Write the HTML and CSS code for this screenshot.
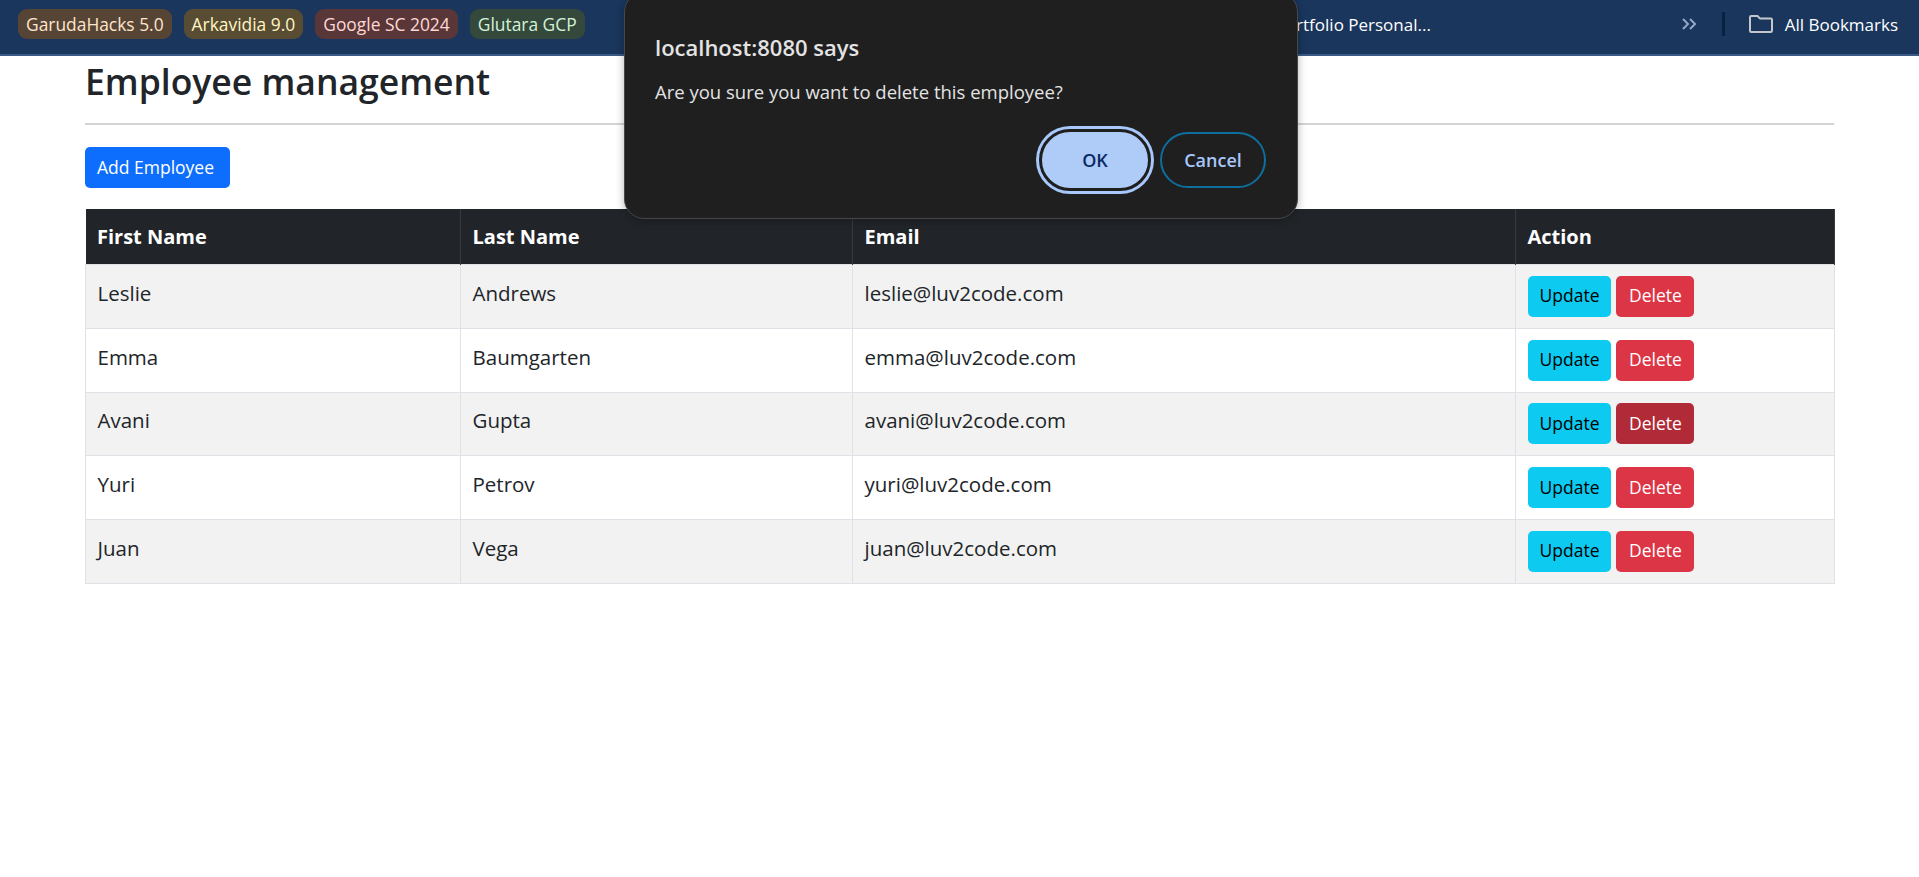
FILE: index.html
```html
<!DOCTYPE html>
<html lang="en">
<head>
<meta charset="utf-8">
<title>Employee management</title>
<link rel="stylesheet" href="styles.css">
</head>
<body>
<header class="bookmarks">
  <a class="chip chip-orange">GarudaHacks 5.0</a>
  <a class="chip chip-yellow">Arkavidia 9.0</a>
  <a class="chip chip-red">Google SC 2024</a>
  <a class="chip chip-green">Glutara GCP</a>
  <a class="plain portfolio">Portfolio Personal...</a>
  <svg class="more" width="14" height="12" viewBox="0 0 14 12"><path d="M1 1l5 5-5 5M8 1l5 5-5 5" fill="none" stroke="#93a6c6" stroke-width="2"/></svg>
  <span class="divider"></span>
  <svg class="folder" width="24" height="18" viewBox="0 0 24 18"><path d="M1 2.2A1.2 1.2 0 0 1 2.2 1h6.3l2.6 2.6h10.7A1.2 1.2 0 0 1 23 4.8v10.9a1.2 1.2 0 0 1-1.2 1.2H2.2A1.2 1.2 0 0 1 1 15.7z" fill="none" stroke="#c4c7cc" stroke-width="2"/></svg>
  <a class="plain">All Bookmarks</a>
</header>

<main class="container">
  <h2 class="title">Employee management</h2>
  <hr class="rule">
  <a class="btn btn-primary add">Add Employee</a>
  <table class="staff">
    <colgroup>
      <col class="c1"><col class="c2"><col class="c3"><col class="c4">
    </colgroup>
    <thead>
      <tr><th>First Name</th><th>Last Name</th><th>Email</th><th>Action</th></tr>
    </thead>
    <tbody>
      <tr><td>Leslie</td><td>Andrews</td><td>leslie@luv2code.com</td><td class="actions"><a class="btn btn-info">Update</a><a class="btn btn-danger">Delete</a></td></tr>
      <tr><td>Emma</td><td>Baumgarten</td><td>emma@luv2code.com</td><td class="actions"><a class="btn btn-info">Update</a><a class="btn btn-danger">Delete</a></td></tr>
      <tr><td>Avani</td><td>Gupta</td><td>avani@luv2code.com</td><td class="actions"><a class="btn btn-info">Update</a><a class="btn btn-danger hover">Delete</a></td></tr>
      <tr><td>Yuri</td><td>Petrov</td><td>yuri@luv2code.com</td><td class="actions"><a class="btn btn-info">Update</a><a class="btn btn-danger">Delete</a></td></tr>
      <tr><td>Juan</td><td>Vega</td><td>juan@luv2code.com</td><td class="actions"><a class="btn btn-info">Update</a><a class="btn btn-danger">Delete</a></td></tr>
    </tbody>
  </table>
</main>

<section class="dialog">
  <h1 class="dialog-title">localhost:8080 says</h1>
  <p class="dialog-text">Are you sure you want to delete this employee?</p>
  <div class="dialog-buttons">
    <button class="pill ok">OK</button>
    <button class="pill cancel">Cancel</button>
  </div>
</section>
</body>
</html>
```
FILE: styles.css
```css
* { box-sizing: border-box; }
html, body { margin: 0; padding: 0; }
body { height: 877px; overflow: hidden; background: #fff; color: #212529; font-family: "Open Sans", "Noto Sans", sans-serif; position: relative; }

.bookmarks { height: 56px; background: #1a365d; border-bottom: 2px solid #3a5a85; display: flex; align-items: center; padding: 0 21px 6px 18px; color: #fff; font-size: 17px; }
.chip { height: 30px; display: flex; align-items: center; padding: 0 8px; border-radius: 9px; margin-right: 12px; white-space: nowrap; font-weight: 500; font-size: 17.4px; }
.chip-orange { background: #564435; color: #ffe4cc; }
.chip-yellow { background: #584c32; color: #fff5c4; }
.chip-red { background: #593739; color: #ffd8d3; }
.chip-green { background: #35483c; color: #d3f3d8; }
.plain { white-space: nowrap; }
.portfolio { margin-left: 679px; }
.more { margin-left: auto; }
.divider { width: 3px; height: 24px; background: #0b2142; margin: 0 24px 0 26px; }
.folder { margin-right: 12px; }

.container { padding: 0 85px; }
.title { margin: -1px 0 0; font-size: 35.5px; font-weight: 600; line-height: 52px; }
.rule { margin: 16px 0 22px; border: 0; border-top: 2px solid #d4d4d4; }
.btn { display: inline-flex; align-items: center; height: 41px; padding: 0 12px 2px; border-radius: 5px; font-size: 17.5px; }
.btn-primary { background: #0d6efd; color: #fff; }
.btn-info { background: #0dcaf0; color: #000; }
.btn-danger { background: #dc3545; color: #fff; margin-left: 5px; padding: 0 12.5px 2px; }
.btn-danger.hover { background: #b02a37; }
.add { display: flex; width: 145px; }

.staff { width: 1749px; table-layout: fixed; border-collapse: collapse; margin-top: 21px; font-size: 20.5px; }
.c1 { width: 375px; } .c2 { width: 392px; } .c3 { width: 663px; } .c4 { width: 319px; }
.staff th { height: 55.5px; padding: 0 11.5px; text-align: left; background: #212529; color: #fff; font-weight: 700; font-size: 20px; border-right: 1px solid #373b3e; }
.staff td { height: 63.75px; padding: 0 11.5px 7px; border: 1px solid #dee2e6; }
.staff tbody tr:nth-child(odd) td { background: #f2f2f2; }
.staff .actions { padding-bottom: 0; }

.dialog { position: absolute; left: 624px; top: -8px; width: 674px; height: 227px; background: #1f1f1f; border: 1px solid #474747; border-radius: 20px; padding: 39px 31px 0 30px; box-shadow: 0 2px 8px rgba(0,0,0,.3); color: #e3e3e3; }
.dialog-title { margin: 0; font-size: 22px; font-weight: 600; line-height: 30px; }
.dialog-text { margin: 18px 0 0; font-size: 18.5px; line-height: 24px; }
.dialog-buttons { display: flex; justify-content: flex-end; margin-top: 25px; align-items: center; }
.pill { font: inherit; font-size: 18px; font-weight: 600; cursor: pointer; padding: 0; }
.ok { width: 112px; height: 62px; border-radius: 31px; margin-right: 9px; background: #afcbf8; color: #0a2a63; border: 3px solid #1f1f1f; box-shadow: 0 0 0 3px #a8c7fa; }
.cancel { width: 106px; height: 56px; border-radius: 28px; background: transparent; color: #a8c7fa; border: 2px solid #0e6e9e; }
```
